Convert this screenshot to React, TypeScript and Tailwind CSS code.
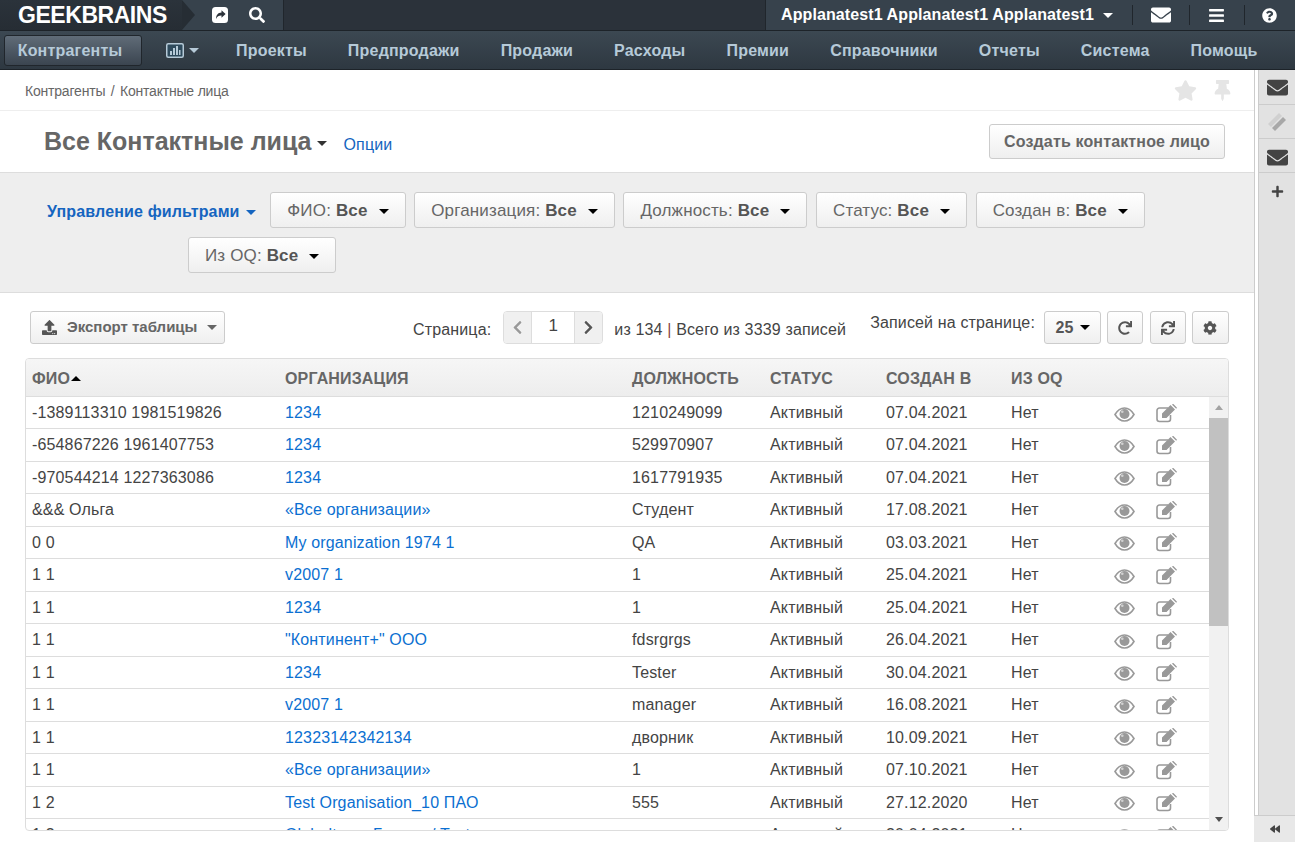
import {
  FaBackward,
  FaBars,
  FaChevronLeft,
  FaChevronRight,
  FaCog,
  FaEnvelope,
  FaPlus,
  FaQuestionCircle,
  FaRedo,
  FaSearch,
  FaStar,
  FaSync,
  FaThumbtack,
  FaUpload,
} from "react-icons/fa";

const menu = ["Проекты", "Предпродажи", "Продажи", "Расходы", "Премии", "Справочники", "Отчеты", "Система", "Помощь"];

const filters = ["ФИО", "Организация", "Должность", "Статус", "Создан в"];

const rows = [
  ["-1389113310 1981519826", "1234", "1210249099", "07.04.2021"],
  ["-654867226 1961407753", "1234", "529970907", "07.04.2021"],
  ["-970544214 1227363086", "1234", "1617791935", "07.04.2021"],
  ["&&& Ольга", "«Все организации»", "Студент", "17.08.2021"],
  ["0 0", "My organization 1974 1", "QA", "03.03.2021"],
  ["1 1", "v2007 1", "1", "25.04.2021"],
  ["1 1", "1234", "1", "25.04.2021"],
  ["1 1", '"Континент+" ООО', "fdsrgrgs", "26.04.2021"],
  ["1 1", "1234", "Tester", "30.04.2021"],
  ["1 1", "v2007 1", "manager", "16.08.2021"],
  ["1 1", "12323142342134", "дворник", "10.09.2021"],
  ["1 1", "«Все организации»", "1", "07.10.2021"],
  ["1 2", "Test Organisation_10 ПАО", "555", "27.12.2020"],
  ["1 3", "Globalteam Бизнес / Test", "", "20.04.2021"],
];

function Caret({ className = "border-t-black" }: { className?: string }) {
  return <span className={`inline-block h-0 w-0 border-x-[5px] border-t-[5px] border-x-transparent ${className}`} />;
}

function EyeIcon() {
  return (
    <svg width="21" height="15" viewBox="0 0 21 15" className="mt-[2px]" aria-hidden="true">
      <path d="M1 7.500C3.500 3.300 6.800 1 10.500 1s7 2.300 9.500 6.500C17.500 11.700 14.200 14 10.500 14S3.500 11.700 1 7.500z" fill="none" stroke="#999" strokeWidth="1.600" />
      <circle cx="10.500" cy="7" r="5" fill="#999" />
      <circle cx="8.300" cy="4.800" r="1.300" fill="#d0d0d0" />
    </svg>
  );
}

function EditIcon() {
  return (
    <svg width="21" height="19" viewBox="0 0 21 19" aria-hidden="true">
      <path d="M14.500 11v4a2.500 2.500 0 0 1-2.500 2.500H3.500A2.500 2.500 0 0 1 1 15V6.500A2.500 2.500 0 0 1 3.500 4H12" fill="none" stroke="#999" strokeWidth="1.600" />
      <path d="M6 9.500 14.500 1 19 5.500 10.500 14H6zM15.800 0.400l4.400 4.400.8-1-3.600-3.800z" fill="#999" />
    </svg>
  );
}

function FilterButton({ label }: { label: string }) {
  return (
    <button
      type="button"
      className="flex h-9 items-center gap-[11px] rounded-[3px] border border-[#ccc] bg-gradient-to-b from-white to-[#efefef] px-[16px] pt-[2px] text-[17px] tracking-[0.15px] text-[#666]"
    >
      <span>
        {label}: <b className="text-[#555]">Все</b>
      </span>
      <Caret />
    </button>
  );
}

function SquareButton({ children, className = "w-9" }: { children: React.ReactNode; className?: string }) {
  return (
    <button
      type="button"
      className={`flex h-[33px] items-center justify-center rounded-[3px] border border-[#ccc] bg-gradient-to-b from-white to-[#efefef] text-[#555] ${className}`}
    >
      {children}
    </button>
  );
}

export default function App() {
  return (
    <div className="flex h-[842px] w-[1295px] flex-col overflow-hidden bg-white font-['Liberation_Sans',Arial,sans-serif] text-[16px] tracking-[0.15px] text-[#444]">
      {/* top bar */}
      <div className="flex h-[31px] shrink-0 items-stretch border-b border-[#1d2329] bg-[#2b323a] text-white">
        <div className="relative flex w-[182px] items-center bg-gradient-to-b from-[#2b333b] to-[#262d34] pl-[18px] text-[23px] font-bold leading-none tracking-[-0.45px]">
          GEEKBRAINS
          <span className="absolute top-0 right-[-13px] z-10 h-0 w-0 border-y-[15px] border-l-[13px] border-y-transparent border-l-[#262d34]" />
        </div>
        <div className="flex w-[102px] items-center gap-[21px] border-r border-[#20262c] bg-[#37424c] pl-[30px]">
          <svg width="16" height="16" viewBox="0 0 16 16" aria-hidden="true">
            <rect width="16" height="16" rx="3.500" fill="#fff" />
            <path d="M9.500 3.200 13.600 7 9.500 10.800V8.600C7 8.500 5.300 9.400 4 12c0-4 2-6.400 5.500-6.600z" fill="#2b323a" />
          </svg>
          <FaSearch className="text-[16px]" />
        </div>
        <div className="flex-1" />
        <div className="flex w-[530px] items-center border-l border-[#20262c] bg-[#37424c]">
          <span className="ml-[15px] whitespace-nowrap font-bold tracking-[0.1px]">Applanatest1 Applanatest1 Applanatest1</span>
          <Caret className="ml-[9px] border-t-white" />
          <span className="ml-[19px] h-5 w-px bg-[#20262c]" />
          <FaEnvelope className="ml-[18px] text-[20px]" />
          <span className="ml-[18px] h-5 w-px bg-[#20262c]" />
          <FaBars className="ml-[18px] text-[17px]" />
          <span className="ml-[19px] h-5 w-px bg-[#20262c]" />
          <FaQuestionCircle className="ml-[17px] text-[15px]" />
        </div>
      </div>

      {/* main menu */}
      <div className="flex h-[39px] shrink-0 items-center border-b border-[#1d2329] bg-gradient-to-b from-[#3c4852] to-[#2e3841] pl-[4px] font-bold tracking-[0.2px] text-[#b6cad8]">
        <div className="flex h-[31px] w-[138px] items-center justify-center rounded-[3px] border border-[#20262c] bg-gradient-to-b from-[#606c78] to-[#3b4550] pt-[1px] pr-[6px]">
          Контрагенты
        </div>
        <div className="ml-[24px] flex items-center gap-[5px]">
          <svg width="18" height="15" viewBox="0 0 18 15" aria-hidden="true">
            <rect x="0.750" y="0.750" width="16.500" height="13.500" rx="1.500" fill="#2e4a5c" stroke="#b6cad8" strokeWidth="1.500" />
            <path d="M4 8h2v4H4zM7 5h2v7H7zM10 3h2v9h-2zM13 7h1.500v5H13z" fill="#b6cad8" />
          </svg>
          <Caret className="border-t-[#b6cad8]" />
        </div>
        <div className="ml-[37px] flex gap-[41px] pt-[1px]">
          {menu.map((m) => (
            <span key={m}>{m}</span>
          ))}
        </div>
      </div>

      <div className="flex min-h-0 flex-1">
        {/* content */}
        <div className="w-[1254px] shrink-0">
          <div className="flex h-[41px] items-center justify-between border-b border-[#eee] pr-[21px] pl-[25px] text-[14px] tracking-[-0.2px] text-[#666]">
            <span className="pt-[3px]">
              Контрагенты<span className="mx-[5.500px]">/</span>Контактные лица
            </span>
            <div className="flex items-center gap-[15px] text-[#e5e5e5]">
              <FaStar className="text-[23px]" />
              <FaThumbtack className="text-[21px]" />
            </div>
          </div>

          <div className="flex h-[62px] items-center justify-between border-b border-[#ddd] pr-[29px] pl-[44px]">
            <div className="flex items-center">
              <span className="text-[25px] font-bold tracking-normal text-[#666]">Все Контактные лица</span>
              <Caret className="mt-[3px] ml-[6px] border-t-[#333]" />
              <span className="mt-[7px] ml-[16px] text-[#1565c0]">Опции</span>
            </div>
            <button
              type="button"
              className="h-[35px] w-[236px] rounded-[3px] border border-[#ccc] bg-gradient-to-b from-white to-[#efefef] font-bold text-[#666]"
            >
              Создать контактное лицо
            </button>
          </div>

          {/* filters */}
          <div className="h-[120px] border-b border-[#ddd] bg-[#eee] pt-[19px] pl-[47px]">
            <div className="flex items-center gap-[8.700px]">
              <div className="mt-[4px] mr-[6px] flex items-center gap-[6px] font-bold text-[#1565c0]">
                Управление фильтрами
                <Caret className="border-t-[#1565c0]" />
              </div>
              {filters.map((f) => (
                <FilterButton key={f} label={f} />
              ))}
            </div>
            <div className="mt-[9px] ml-[141px]">
              <div className="inline-flex">
                <FilterButton label="Из OQ" />
              </div>
            </div>
          </div>

          {/* toolbar */}
          <div className="flex h-[65px] items-start pt-[18px] pl-[30px]">
            <button
              type="button"
              className="flex h-[33px] w-[195px] items-center rounded-[3px] border border-[#ccc] bg-gradient-to-b from-white to-[#efefef] pl-[11px] text-[15px] font-bold tracking-normal text-[#666]"
            >
              <FaUpload className="text-[15px] text-[#555]" />
              <span className="ml-[10px]">Экспорт таблицы</span>
              <Caret className="ml-[10px]" />
            </button>
            <span className="mt-[7px] ml-[188px]">Страница:</span>
            <div className="ml-[12px] flex h-[33px] w-[100px] items-stretch overflow-hidden rounded-[4px] border border-[#ddd]">
              <span className="flex w-[27px] items-center justify-center bg-[#f0f0f0] text-[15px] text-[#999]">
                <FaChevronLeft />
              </span>
              <span className="flex flex-1 items-center justify-center border-x border-[#ddd] bg-white pb-[3px] text-[17px]">1</span>
              <span className="flex w-[27px] items-center justify-center bg-[#f0f0f0] text-[15px] text-[#555]">
                <FaChevronRight />
              </span>
            </div>
            <span className="mt-[7px] ml-[11px]">
              из 134 <span className="text-[#844]">|</span> Всего из 3339 записей
            </span>
            <span className="ml-[24px]">Записей на странице:</span>
            <SquareButton className="ml-[9px] w-[57px] gap-[6px] font-bold">
              <span>25</span>
              <Caret />
            </SquareButton>
            <SquareButton className="ml-[6px] w-[36px]">
              <FaRedo className="text-[14px]" />
            </SquareButton>
            <SquareButton className="ml-[7px] w-[36px]">
              <FaSync className="text-[14px]" />
            </SquareButton>
            <SquareButton className="ml-[6px] w-[37px]">
              <FaCog className="text-[14px]" />
            </SquareButton>
          </div>

          {/* table */}
          <div className="mx-[25px] h-[473px] w-[1204px] overflow-hidden rounded-[4px] border border-[#ddd]">
            <div className="flex h-[38px] items-center border-b border-[#ddd] bg-gradient-to-b from-[#f6f6f6] to-[#ededed] pt-[3px] font-bold text-[#666]">
              <span className="w-[259px] pl-[6px]">
                ФИО<span className="ml-[1px] inline-block h-0 w-0 -translate-y-[3px] border-x-[5px] border-b-[5px] border-x-transparent border-b-black" />
              </span>
              <span className="w-[347px]">ОРГАНИЗАЦИЯ</span>
              <span className="w-[138px]">ДОЛЖНОСТЬ</span>
              <span className="w-[116px]">СТАТУС</span>
              <span className="w-[125px]">СОЗДАН В</span>
              <span>ИЗ OQ</span>
            </div>
            <div className="flex h-[433px]">
              <div className="min-w-0 flex-1 overflow-hidden">
                {rows.map((r, i) => (
                  <div key={i} className="flex h-[32.5px] items-center border-b border-[#ddd] pt-[1px] text-[#444] first:h-[32px]">
                    <span className="w-[259px] pl-[6px]">{r[0]}</span>
                    <span className="w-[347px] text-[#0b6fd1]">{r[1]}</span>
                    <span className="w-[138px]">{r[2]}</span>
                    <span className="w-[116px]">Активный</span>
                    <span className="w-[125px]">{r[3]}</span>
                    <span className="w-[81px]">Нет</span>
                    <span className="flex w-[64px] justify-center">
                      <EyeIcon />
                    </span>
                    <EditIcon />
                  </div>
                ))}
              </div>
              <div className="flex w-[19px] shrink-0 flex-col bg-[#f1f1f1]">
                <div className="flex h-[21px] items-center justify-center">
                  <span className="h-0 w-0 border-x-[4px] border-b-[5px] border-x-transparent border-b-[#a3a3a3]" />
                </div>
                <div className="h-[208px] bg-[#c1c1c1]" />
                <div className="flex-1" />
                <div className="flex h-[22px] items-center justify-center">
                  <span className="h-0 w-0 border-x-[4px] border-t-[5px] border-x-transparent border-t-[#505050]" />
                </div>
              </div>
            </div>
          </div>
        </div>

        {/* right panel */}
        <div className="flex flex-1 flex-col">
          <div className="flex min-h-0 flex-1 border-l border-[#ccc] pl-[3px]">
            <div className="flex-1 border-l border-[#ccc] bg-[#e2e2e2] text-[#444]">
              <div className="flex h-[35px] items-center justify-center border-b border-[#ccc]">
                <FaEnvelope className="text-[21px]" />
              </div>
              <div className="flex h-[34px] items-center justify-center border-b border-[#ccc]">
                <svg width="20" height="20" viewBox="0 0 20 20" aria-hidden="true">
                  <path d="M1 12 12 1l3 3L4 15z" fill="#d0d0d0" />
                  <path d="M5 16 16 5l3 3L8 19z" fill="#a8a8a8" />
                </svg>
              </div>
              <div className="flex h-[34px] items-center justify-center border-b border-[#ccc] pt-[4px]">
                <FaEnvelope className="text-[21px]" />
              </div>
              <div className="flex h-[36px] items-center justify-center">
                <FaPlus className="text-[13px]" />
              </div>
            </div>
          </div>
          <div className="flex h-[27px] items-center justify-center border-t border-[#ccc] bg-[#e8e8e8] text-[#444]">
            <FaBackward className="text-[10px]" />
          </div>
        </div>
      </div>
    </div>
  );
}
